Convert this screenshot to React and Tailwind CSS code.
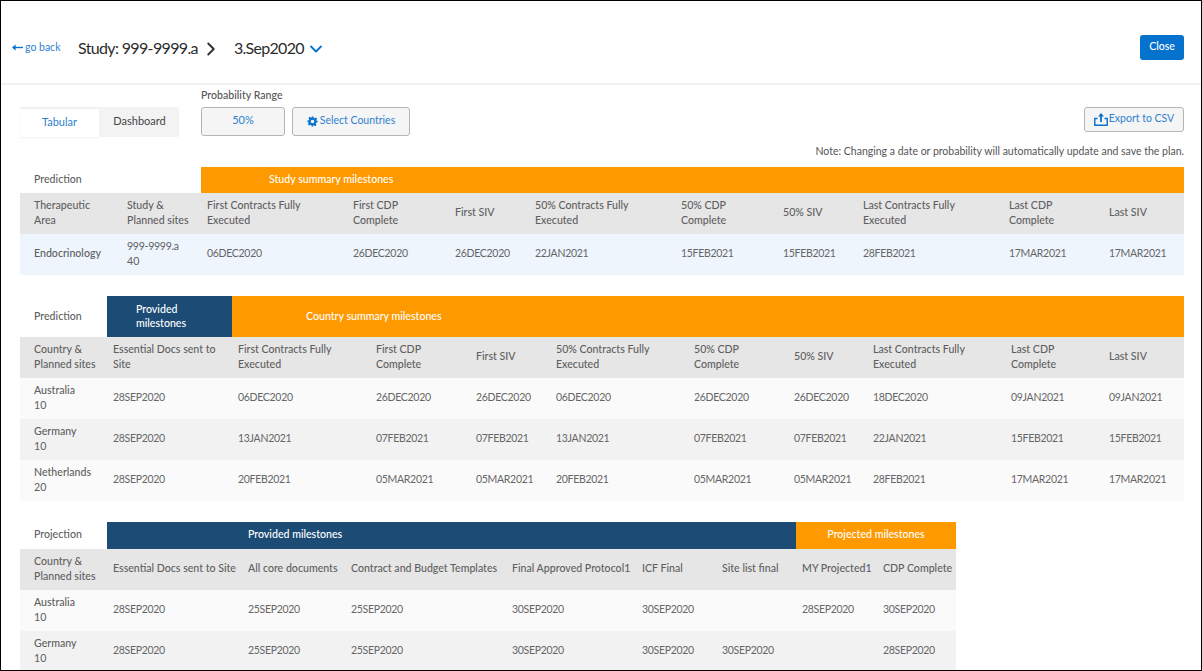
import { ChevronDown, ChevronRight } from 'lucide-react';

const STUDY_COLS = 'grid grid-cols-[101px_80px_146px_102px_80px_146px_102px_80px_146px_100px_81px]';
const COUNTRY_COLS = 'grid grid-cols-[87px_125px_138px_100px_80px_138px_100px_79px_138px_98px_81px]';
const PROJECTION_COLS = 'grid grid-cols-[87px_135px_103px_161px_130px_80px_80px_81px_79px]';

const studyHeaders = ['Therapeutic\nArea', 'Study &\nPlanned sites', 'First Contracts Fully\nExecuted', 'First CDP\nComplete', 'First SIV', '50% Contracts Fully\nExecuted', '50% CDP\nComplete', '50% SIV', 'Last Contracts Fully\nExecuted', 'Last CDP\nComplete', 'Last SIV'];
const studyRow = ['06DEC2020', '26DEC2020', '26DEC2020', '22JAN2021', '15FEB2021', '15FEB2021', '28FEB2021', '17MAR2021', '17MAR2021'];

const countryHeaders = ['Country &\nPlanned sites', 'Essential Docs sent to\nSite', 'First Contracts Fully\nExecuted', 'First CDP\nComplete', 'First SIV', '50% Contracts Fully\nExecuted', '50% CDP\nComplete', '50% SIV', 'Last Contracts Fully\nExecuted', 'Last CDP\nComplete', 'Last SIV'];
const countryRows = [
  ['Australia', '10', '28SEP2020', '06DEC2020', '26DEC2020', '26DEC2020', '06DEC2020', '26DEC2020', '26DEC2020', '18DEC2020', '09JAN2021', '09JAN2021'],
  ['Germany', '10', '28SEP2020', '13JAN2021', '07FEB2021', '07FEB2021', '13JAN2021', '07FEB2021', '07FEB2021', '22JAN2021', '15FEB2021', '15FEB2021'],
  ['Netherlands', '20', '28SEP2020', '20FEB2021', '05MAR2021', '05MAR2021', '20FEB2021', '05MAR2021', '05MAR2021', '28FEB2021', '17MAR2021', '17MAR2021'],
];

const projectionHeaders = ['Country &\nPlanned sites', 'Essential Docs sent to Site', 'All core documents', 'Contract and Budget Templates', 'Final Approved Protocol1', 'ICF Final', 'Site list final', 'MY Projected1', 'CDP Complete'];
const projectionRows = [
  ['Australia', '10', '28SEP2020', '25SEP2020', '25SEP2020', '30SEP2020', '30SEP2020', '', '28SEP2020', '30SEP2020'],
  ['Germany', '10', '28SEP2020', '25SEP2020', '25SEP2020', '30SEP2020', '30SEP2020', '30SEP2020', '', '28SEP2020'],
];

// header row shared by the three tables, line breaks come from the labels
const HeaderRow = ({ cols, labels }) => (
  <div className={`${cols} h-[41px] bg-[#e6e6e6] text-[10.6px] font-medium text-[#5f5f5f]`}>
    {labels.map((label, i) => (
      <div key={label} className={`flex items-center whitespace-pre pb-[2px] leading-[14.5px] ${i === 0 ? 'pl-[14px]' : 'pl-[6px]'}`}>
        <span>{label}</span>
      </div>
    ))}
  </div>
);

const DateCell = ({ value }) => (
  <div className="flex items-center pb-[1px] pl-[6px] text-[10.5px] tracking-[-0.3px] text-[#666666]">{value}</div>
);

const DataRow = ({ cols, row, bg }) => (
  <div className={`${cols} h-[41px] ${bg} text-[#5f5f5f]`}>
    <div className="flex flex-col justify-center pb-[2px] pl-[14px] text-[10.6px] leading-[14.5px]">
      <span className="font-medium">{row[0]}</span>
      <span>{row[1]}</span>
    </div>
    {row.slice(2).map((value, i) => (
      <DateCell key={i} value={value} />
    ))}
  </div>
);

const BackArrow = () => (
  <svg width="11" height="7" viewBox="0 0 11 7" className="mr-[2px]">
    <path d="M3 3.5h8" stroke="#0572ce" strokeWidth="1.4" />
    <path d="M0 3.5L3.6.5v6z" fill="#0572ce" />
  </svg>
);

const CogIcon = () => (
  <svg width="11" height="11" viewBox="0 0 24 24" fill="#0572ce" className="mr-[2px] mt-[2px]">
    <path fillRule="evenodd" d="M10 1h4l.7 3.2 1.9.8 2.8-1.8 2.8 2.8-1.8 2.8.8 1.9L23 10v4l-3.2.7-.8 1.9 1.8 2.8-2.8 2.8-2.8-1.8-1.9.8L13 23h-3l-.7-3.2-1.9-.8-2.8 1.8-2.8-2.8 1.8-2.8-.8-1.9L1 14v-4l3.2-.7.8-1.9-1.8-2.8 2.8-2.8 2.8 1.8 1.9-.8zM12 8a4 4 0 100 8 4 4 0 000-8z" />
  </svg>
);

const ExportIcon = () => (
  <svg width="14" height="13" viewBox="0 0 14 13" fill="none" className="mr-[1px] mt-[2px]">
    <path d="M3.5 5.5H.8v6.7h12.4V5.5h-2.7" stroke="#0572ce" strokeWidth="1.4" />
    <path d="M7 9V2" stroke="#0572ce" strokeWidth="1.8" />
    <path d="M7 0l3 3.4H4z" fill="#0572ce" />
  </svg>
);

const App = () => {
  return (
    <div className="h-[671px] w-[1202px] overflow-hidden border border-black bg-white text-[11px] font-['Lato','Noto_Sans',sans-serif] text-[#5f5f5f]">
      <header className="flex h-[84px] items-center justify-between border-b-2 border-[#f0f0f0] pl-[11px] pr-[17px] pt-[11px]">
        <div className="flex items-center">
          <a className="flex w-[66px] items-center text-[10.5px] text-[#2f81d0]">
            <BackArrow />go back
          </a>
          <span className="text-[16px] tracking-[-0.65px] text-[#2c2c2c]">Study: 999-9999.a</span>
          <ChevronRight className="ml-[2px] mt-[2px]" size={22} strokeWidth={2} color="#2c2c2c" />
          <span className="ml-[12px] text-[16px] tracking-[-0.7px] text-[#2c2c2c]">3.Sep2020</span>
          <ChevronDown className="ml-[2px] mt-[2px]" size={20} strokeWidth={2.2} color="#0572ce" />
        </div>
        <button className="h-[25px] w-[44px] rounded-[3px] bg-[#0572ce] pb-[1px] text-[10.5px] font-medium text-white">Close</button>
      </header>

      <main className="pl-[19px] pr-[17px]">
        <div className="flex h-[82px] justify-between">
          <div className="flex">
            <div className="mt-[22px] flex h-[30px] w-[159px] rounded-[2px] bg-[#f3f3f3]">
              <div className="flex w-[79px] items-center justify-center border-t-2 border-[#f0f0f0] bg-white pb-[2px] text-[#2f81d0] shadow-[0_1px_2px_#eeeeee]">Tabular</div>
              <div className="flex flex-1 items-center justify-center pb-[2px] pl-[1px] text-[#444444]">Dashboard</div>
            </div>
            <div className="ml-[22px] pt-[3px]">
              <div className="h-[19px] text-[10.6px] font-medium leading-[14px] text-[#555555]">Probability Range</div>
              <div className="flex gap-[7px]">
                <button className="h-[29px] w-[84px] rounded-[3px] border border-[#b5b5b5] bg-[#f5f5f5] pb-[2px] text-[#2f81d0]">50%</button>
                <button className="flex h-[29px] w-[118px] items-center justify-center rounded-[3px] border border-[#b5b5b5] bg-[#f5f5f5] pb-[2px] text-[10.5px] text-[#2f81d0]">
                  <CogIcon />Select Countries
                </button>
              </div>
            </div>
          </div>
          <div className="flex flex-col items-end pt-[22px]">
            <button className="flex h-[25px] w-[100px] items-center justify-center rounded-[3px] border border-[#b5b5b5] bg-[#f5f5f5] pb-[2px] text-[10.5px] text-[#2f81d0]">
              <ExportIcon />Export to CSV
            </button>
            <p className="mt-[12px] text-[10.5px] leading-[14px] text-[#555555]">Note: Changing a date or probability will automatically update and save the plan.</p>
          </div>
        </div>

        <section className="mb-[21px]">
          <div className="flex h-[26px] items-center text-[10.6px]">
            <div className="w-[181px] pb-[1px] pl-[14px] font-medium">Prediction</div>
            <div className="flex h-full flex-1 items-center bg-[#ff9900] pb-[1px] pl-[68px] font-medium text-white">Study summary milestones</div>
          </div>
          <HeaderRow cols={STUDY_COLS} labels={studyHeaders} />
          <div className={`${STUDY_COLS} h-[41px] bg-[#eef5fd]`}>
            <div className="flex items-center pb-[1px] pl-[14px] text-[10.6px] font-medium">Endocrinology</div>
            <div className="flex flex-col justify-center pb-[2px] pl-[6px] text-[10.6px] leading-[14.5px]"><span className="tracking-[-0.3px]">999-9999.a</span><span>40</span></div>
            {studyRow.map((value, i) => (
              <DateCell key={i} value={value} />
            ))}
          </div>
        </section>

        <section className="mb-[21px]">
          <div className="flex h-[41px] items-center text-[10.6px]">
            <div className="w-[87px] pl-[14px] font-medium">Prediction</div>
            <div className="flex h-full w-[125px] items-center bg-[#1c4c75] pb-[1px] pl-[29px] pr-[20px] font-medium leading-[14.5px] text-white">Provided milestones</div>
            <div className="flex h-full flex-1 items-center bg-[#ff9900] pl-[74px] font-medium text-white">Country summary milestones</div>
          </div>
          <HeaderRow cols={COUNTRY_COLS} labels={countryHeaders} />
          {countryRows.map((row, i) => (
            <DataRow key={row[0]} cols={COUNTRY_COLS} row={row} bg={i % 2 ? 'bg-[#f2f2f2]' : 'bg-[#fafafa]'} />
          ))}
        </section>

        <section className="w-[936px]">
          <div className="flex h-[27px] items-center text-[10.6px]">
            <div className="w-[87px] pb-[1px] pl-[14px] font-medium">Projection</div>
            <div className="flex h-full w-[689px] items-center bg-[#1c4c75] pb-[1px] pl-[141px] font-medium text-white">Provided milestones</div>
            <div className="flex h-full flex-1 items-center justify-center bg-[#ff9900] pb-[1px] font-medium text-white">Projected milestones</div>
          </div>
          <HeaderRow cols={PROJECTION_COLS} labels={projectionHeaders} />
          {projectionRows.map((row, i) => (
            <DataRow key={row[0]} cols={PROJECTION_COLS} row={row} bg={i % 2 ? 'bg-[#f2f2f2]' : 'bg-[#fafafa]'} />
          ))}
        </section>
      </main>
    </div>
  );
};

export default App;
